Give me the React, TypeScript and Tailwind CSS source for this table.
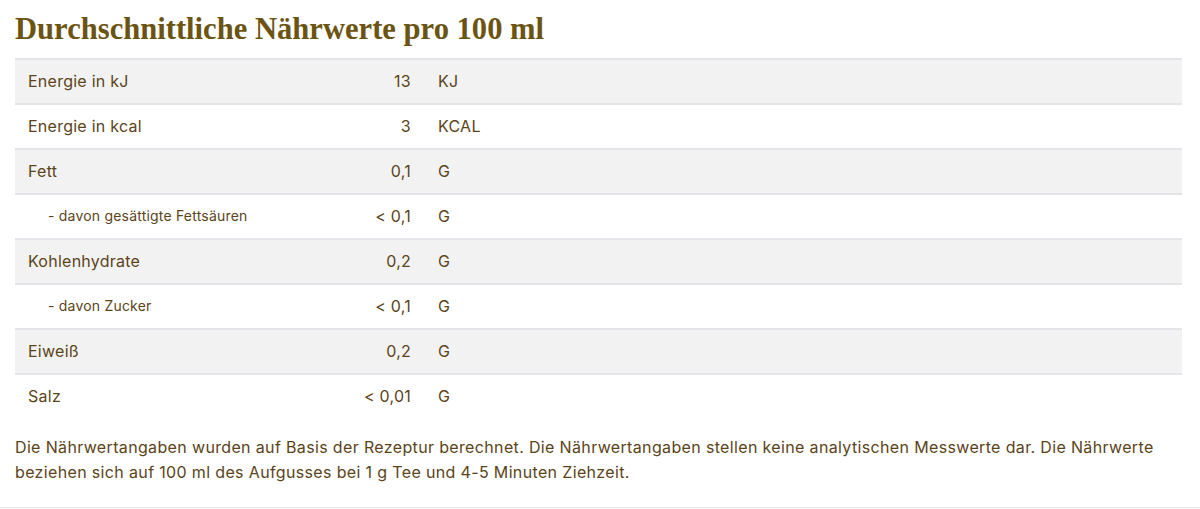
import React from "react";

type Row = { label: string; value: string; unit: string; sub?: boolean };

const rows: Row[] = [
  { label: "Energie in kJ", value: "13", unit: "KJ" },
  { label: "Energie in kcal", value: "3", unit: "KCAL" },
  { label: "Fett", value: "0,1", unit: "G" },
  { label: "- davon gesättigte Fettsäuren", value: "< 0,1", unit: "G", sub: true },
  { label: "Kohlenhydrate", value: "0,2", unit: "G" },
  { label: "- davon Zucker", value: "< 0,1", unit: "G", sub: true },
  { label: "Eiweiß", value: "0,2", unit: "G" },
  { label: "Salz", value: "< 0,01", unit: "G" },
];

const App: React.FC = () => {
  return (
    <div className="w-[1200px] h-[509px] bg-white text-[#5b4419] font-['Inter','Noto_Sans',sans-serif]">
      <div className="border-b border-[#e6e6e6] pb-[22px]">
        <div className="px-[15px]">
          <h2 className="pt-[13px] pb-[13px] font-['Liberation_Serif',serif] font-bold text-[30.6px] leading-[32px] text-[#6b5412]">
            Durchschnittliche Nährwerte pro 100 ml
          </h2>

          {/* table */}
          <div className="w-[1167px] tracking-[0.25px]">
            {rows.map((row, i) => (
              <div
                key={i}
                className={`flex items-center h-[45px] pb-[2px] border-t-2 border-[#e3e5e8] ${
                  i % 2 === 0 ? "bg-[#f2f2f2]" : "bg-white"
                }`}
              >
                <div
                  className={`w-[285px] ${
                    row.sub
                      ? "pl-[33px] text-[14px] tracking-[0.2px]"
                      : "pl-[13px] text-[16px]"
                  }`}
                >
                  {row.label}
                </div>
                <div className="w-[111px] text-right text-[16px]">{row.value}</div>
                <div className="pl-[27px] text-[16px]">{row.unit}</div>
              </div>
            ))}
          </div>

          <p className="mt-[17px] text-[16px] leading-[25px] tracking-[0.35px]">
            Die Nährwertangaben wurden auf Basis der Rezeptur berechnet. Die
            Nährwertangaben stellen keine analytischen Messwerte dar. Die
            Nährwerte beziehen sich auf 100 ml des Aufgusses bei 1 g Tee und
            4-5 Minuten Ziehzeit.
          </p>
        </div>
      </div>
    </div>
  );
};

export default App;
